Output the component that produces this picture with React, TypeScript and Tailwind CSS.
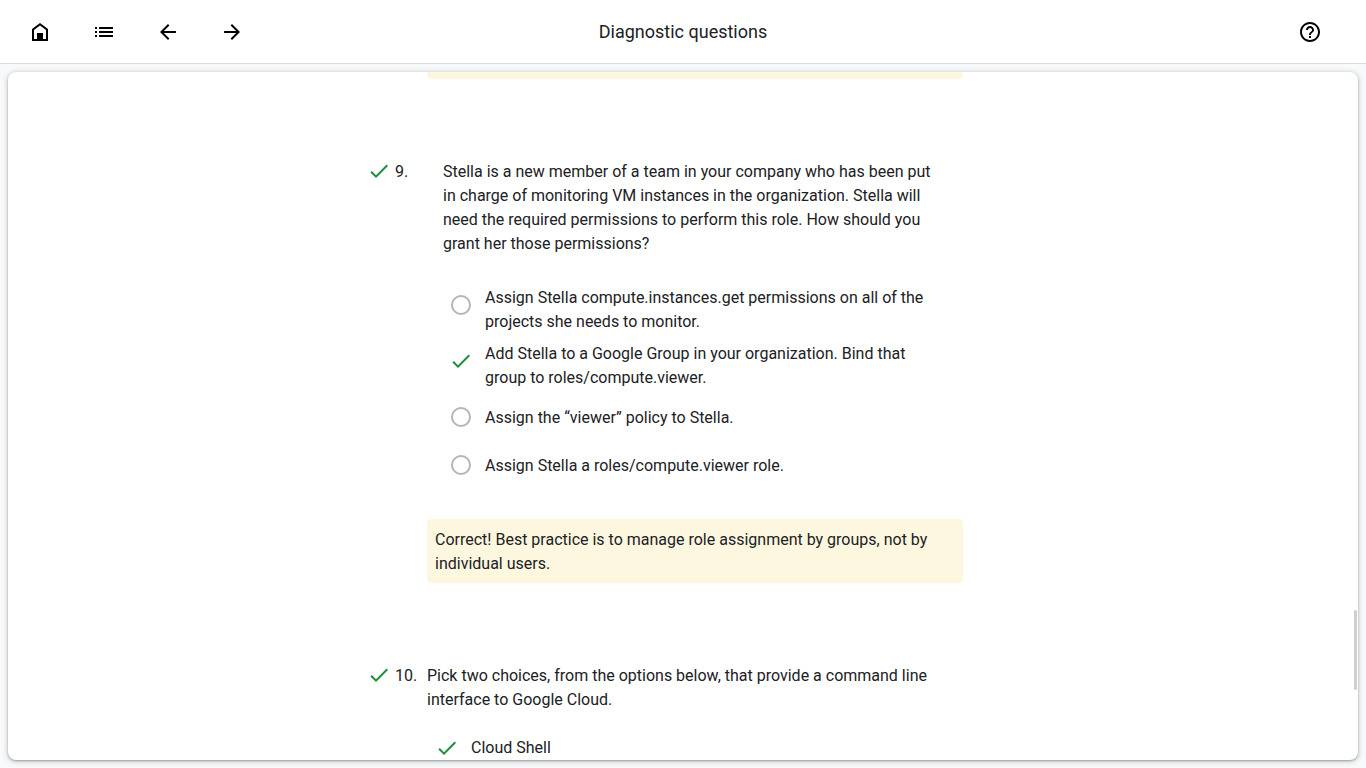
import type { ReactNode } from 'react';

const ICONS = {
  home: 'M12 3 4 9v12h16V9zM6 10v9h12v-9l-6-4.5zM9 13h6v6H9z',
  list: 'M3 13h2v-2H3v2zm0 4h2v-2H3v2zm0-8h2V7H3v2zm4 4h14v-2H7v2zm0 4h14v-2H7v2zM7 7v2h14V7H7z',
  back: 'M20 11H7.83l5.59-5.59L12 4l-8 8 8 8 1.41-1.41L7.83 13H20v-2z',
  forward: 'M12 4l-1.41 1.41L16.17 11H4v2h12.17l-5.58 5.59L12 20l8-8z',
  help: 'M11 18h2v-2h-2v2zm1-16C6.48 2 2 6.48 2 12s4.48 10 10 10 10-4.48 10-10S17.52 2 12 2zm0 18c-4.41 0-8-3.59-8-8s3.59-8 8-8 8 3.59 8 8-3.59 8-8 8zm0-14c-2.21 0-4 1.79-4 4h2c0-1.1.9-2 2-2s2 .9 2 2c0 2-3 1.75-3 5h2c0-2.25 3-2.5 3-5 0-2.21-1.79-4-4-4z',
  check: 'M9 16.17 4.83 12l-1.42 1.41L9 19 21 7l-1.41-1.41z',
};

function Icon({ name, className = '' }: { name: keyof typeof ICONS; className?: string }) {
  return (
    <svg viewBox="0 0 24 24" aria-hidden="true" className={`size-6 shrink-0 fill-current ${className}`}>
      <path fillRule="evenodd" d={ICONS[name]} />
    </svg>
  );
}

function IconButton({ name, label }: { name: keyof typeof ICONS; label: string }) {
  return (
    <button type="button" aria-label={label} className="flex size-12 items-center justify-center rounded-full text-black">
      <Icon name={name} />
    </button>
  );
}

function Option({ group, text, checked = false }: { group: string; text: string; checked?: boolean }) {
  return (
    <label className="flex items-start">
      <span className="flex h-[46px] w-9 shrink-0 items-center justify-center">
        {checked && <Icon name="check" className="text-[#1e8e3e]" />}
        <input
          type="radio"
          name={group}
          defaultChecked={checked}
          className={checked ? 'sr-only' : 'size-5 appearance-none rounded-full border-2 border-[#b5b5b5]'}
        />
      </span>
      <span className="flex min-h-12 flex-1 items-center py-1 pl-1.5">{text}</span>
    </label>
  );
}

function Question({ number, children }: { number: string; children: ReactNode }) {
  return (
    <li className="flex items-start">
      <Icon name="check" className="-mt-px text-[#1e8e3e]" />
      <span className="w-9 shrink-0 pl-1">{number}</span>
      <div className="min-w-0 flex-1">{children}</div>
    </li>
  );
}

export default function App() {
  return (
    <div className="flex h-screen flex-col bg-[#f8f9fa] font-['Roboto',sans-serif] text-base leading-6 text-[#202124]">
      <header className="grid h-16 shrink-0 grid-cols-[1fr_auto_1fr] items-center border-b border-[#dadce0] bg-white px-4">
        <nav className="flex gap-4">
          <IconButton name="home" label="Home" />
          <IconButton name="list" label="Outline" />
          <IconButton name="back" label="Previous" />
          <IconButton name="forward" label="Next" />
        </nav>
        <h1 className="text-lg">Diagnostic questions</h1>
        <div className="flex justify-end pr-4">
          <IconButton name="help" label="Help" />
        </div>
      </header>

      <main className="relative m-2 min-h-0 flex-1 overflow-hidden rounded-lg bg-white shadow-[0_1px_2px_rgba(60,64,67,0.4),0_1px_4px_2px_rgba(60,64,67,0.15)]">
        <div className="mx-auto max-w-[632px] pr-9">
          <div className="ml-15 h-[7px] rounded-b bg-[#fef7e0]" />
          <ol className="mt-[81px] flex flex-col gap-[81px]">
            <Question number="9.">
              <p className="px-4">
                Stella is a new member of a team in your company who has been put in charge of monitoring VM instances
                in the organization. Stella will need the required permissions to perform this role. How should you
                grant her those permissions?
              </p>
              <div className="mt-[26px] px-4" role="radiogroup" aria-label="Question 9">
                <Option group="q9" text="Assign Stella compute.instances.get permissions on all of the projects she needs to monitor." />
                <Option group="q9" checked text="Add Stella to a Google Group in your organization. Bind that group to roles/compute.viewer." />
                <Option group="q9" text="Assign the “viewer” policy to Stella." />
                <Option group="q9" text="Assign Stella a roles/compute.viewer role." />
              </div>
              <p className="mt-[29px] rounded bg-[#fef7e0] px-2 pt-[9px] pb-[7px]">
                Correct! Best practice is to manage role assignment by groups, not by individual users.
              </p>
            </Question>
            <Question number="10.">
              <p>Pick two choices, from the options below, that provide a command line interface to Google Cloud.</p>
              <label className="mt-6 flex items-center pl-2">
                <input type="checkbox" defaultChecked className="sr-only" />
                <Icon name="check" className="-mt-px text-[#1e8e3e]" />
                <span className="pl-3">Cloud Shell</span>
              </label>
            </Question>
          </ol>
        </div>
        <div className="absolute right-px bottom-[70px] h-20 w-[3px] rounded-full bg-[#cfcfcf]" />
      </main>
    </div>
  );
}
